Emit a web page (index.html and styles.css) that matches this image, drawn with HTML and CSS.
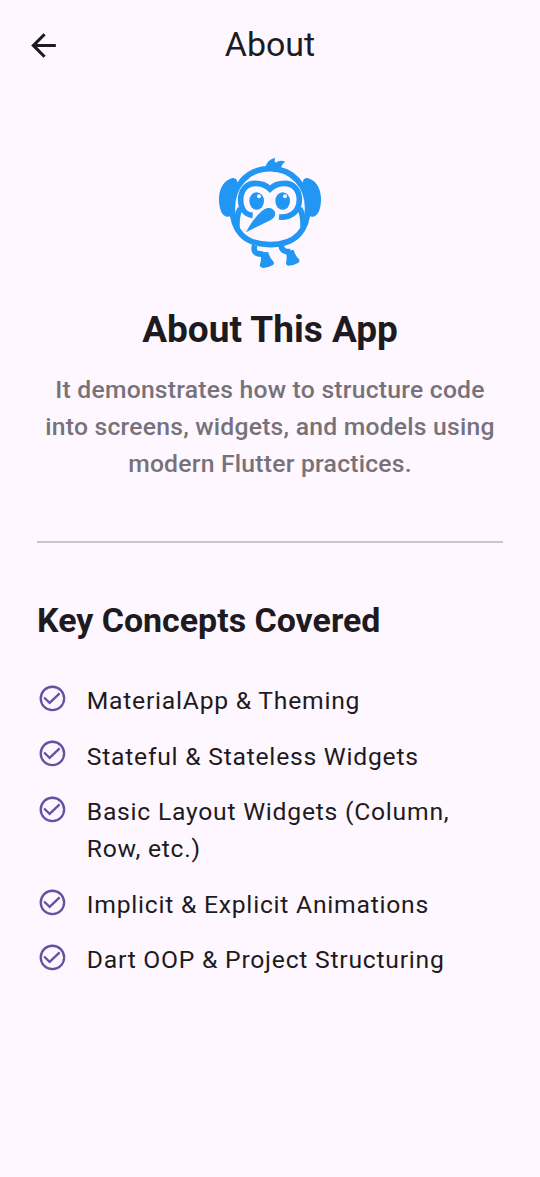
FILE: index.html
```html
<!DOCTYPE html>
<html lang="en">
<head>
<meta charset="utf-8">
<title>About</title>
<link rel="stylesheet" href="styles.css">
</head>
<body>
<svg class="defs" aria-hidden="true">
  <symbol id="check" viewBox="0 0 24 24"><circle cx="12" cy="12" r="9.1"/><path d="M5.5 11.3 9.8 15.4 17.6 8"/></symbol>
</svg>
<header class="app-bar">
  <svg class="back" viewBox="0 0 24 24"><path d="M20 11H7.83l5.59-5.59L12 4l-8 8 8 8 1.41-1.41L7.83 13H20v-2z"/></svg>
  <div class="app-title">About</div>
</header>
<main class="content">
  <svg class="mascot" viewBox="0 0 390 405">
    <g class="fill">
      <path d="M181 68Q185 44 210 38Q207 48 212 53Q224 44 241 50Q230 56 228 70Z"/>
      <path d="M95 104Q88 96 76 101C52 110 41 138 42 166C43 194 51 213 65 215Q72 216 80 212L88 190Q86 150 98 118Z"/>
      <path d="M295 104Q302 96 314 101C338 110 349 138 348 166C347 194 339 213 325 215Q318 216 310 212L302 190Q304 150 292 118Z"/>
      <path d="M123 262C137 235 157 207 178 193C192 184 207 190 210 202C213 213 206 221 193 227Z"/>
      <path d="M166 325Q177 319 190 322Q193 337 206 351Q209 357 202 361Q190 369 174 369Q165 368 164 361Q171 343 166 325Z"/>
      <path d="M243 322Q255 314 266 315Q270 331 282 343Q286 349 279 354Q266 362 249 362Q242 360 243 353Q247 337 243 322Z"/>
      <ellipse cx="155" cy="168" rx="22" ry="26"/>
      <ellipse cx="233" cy="168" rx="22" ry="26"/>
    </g>
    <g class="line">
      <path d="M195 71C128 71 82 122 82 190C82 254 116 299 195 299C274 299 308 254 308 190C308 122 262 71 195 71Z"/>
      <path d="M143 211C121 209 107 191 107 164C107 135 125 115 151 115C171 115 184 121 195 132C206 121 219 115 239 115C265 115 283 135 283 164C283 197 260 219 222 216"/>
      <path d="M106 190Q94 211 96 249M284 190Q296 211 294 249"/>
      <path d="M149 301Q143 322 159 326L174 328M228 301Q230 317 246 320L256 320"/>
    </g>
    <circle class="glint" cx="162" cy="154" r="6"/>
    <circle class="glint" cx="240" cy="154" r="6"/>
  </svg>
  <h1 class="headline">About This App</h1>
  <p class="summary">It demonstrates how to structure code<br>into screens, widgets, and models using<br>modern Flutter practices.</p>
  <hr class="divider">
  <h2 class="section-title">Key Concepts Covered</h2>
  <ul class="concepts">
    <li class="concept"><svg class="check"><use href="#check"/></svg><span>MaterialApp &amp; Theming</span></li>
    <li class="concept"><svg class="check"><use href="#check"/></svg><span>Stateful &amp; Stateless Widgets</span></li>
    <li class="concept"><svg class="check"><use href="#check"/></svg><span>Basic Layout Widgets (Column,<br>Row, etc.)</span></li>
    <li class="concept"><svg class="check"><use href="#check"/></svg><span>Implicit &amp; Explicit Animations</span></li>
    <li class="concept"><svg class="check"><use href="#check"/></svg><span>Dart OOP &amp; Project Structuring</span></li>
  </ul>
</main>
</body>
</html>
```
FILE: styles.css
```css
* { box-sizing: border-box; }
body {
  margin: 0;
  min-height: 1177px;
  background: #fef7ff;
  color: #1d1b20;
  font-family: Roboto, "Liberation Sans", sans-serif;
}
.defs { display: none; }
.app-bar {
  display: grid;
  grid-template-columns: 62px 1fr 62px;
  align-items: center;
  height: 90px;
}
.back { width: 37px; height: 37px; margin: 1px 0 0 24.6px; fill: #1d1b20; }
.app-title { margin-bottom: 2px; text-align: center; font-size: 33.94px; line-height: 43px; }
.content { display: flex; flex-direction: column; padding: 55px 37px 0; }
.mascot { width: 130px; height: 135px; align-self: center; }
.fill { fill: #2196f3; }
.line { fill: none; stroke: #2196f3; stroke-width: 17; }
.glint { fill: #fef7ff; }
.headline {
  margin: 25px 0 0;
  text-align: center;
  font-size: 37.03px;
  line-height: 49px;
  font-weight: 700;
}
.summary {
  margin: 17px 0 0;
  text-align: center;
  white-space: nowrap;
  font-size: 24.69px;
  line-height: 37.03px;
  letter-spacing: .23px;
  font-weight: 500;
  color: #77727a;
}
.divider { width: 100%; height: 1.5px; margin: 59px 0 0; border: 0; background: #cac4d0; }
.section-title { margin: 56px 0 0; font-size: 33.94px; line-height: 43px; font-weight: 700; }
.concepts { margin: 31.3px 0 0; padding: 0; list-style: none; }
.concept {
  display: flex;
  gap: 18.9px;
  padding: 9.25px 0;
  font-size: 24.69px;
  line-height: 37.03px;
  letter-spacing: .76px;
}
.check {
  flex: none;
  width: 30.86px;
  height: 30.86px;
  margin-top: .8px;
  fill: none;
  stroke: #6750a4;
  stroke-width: 1.8;
}
```
